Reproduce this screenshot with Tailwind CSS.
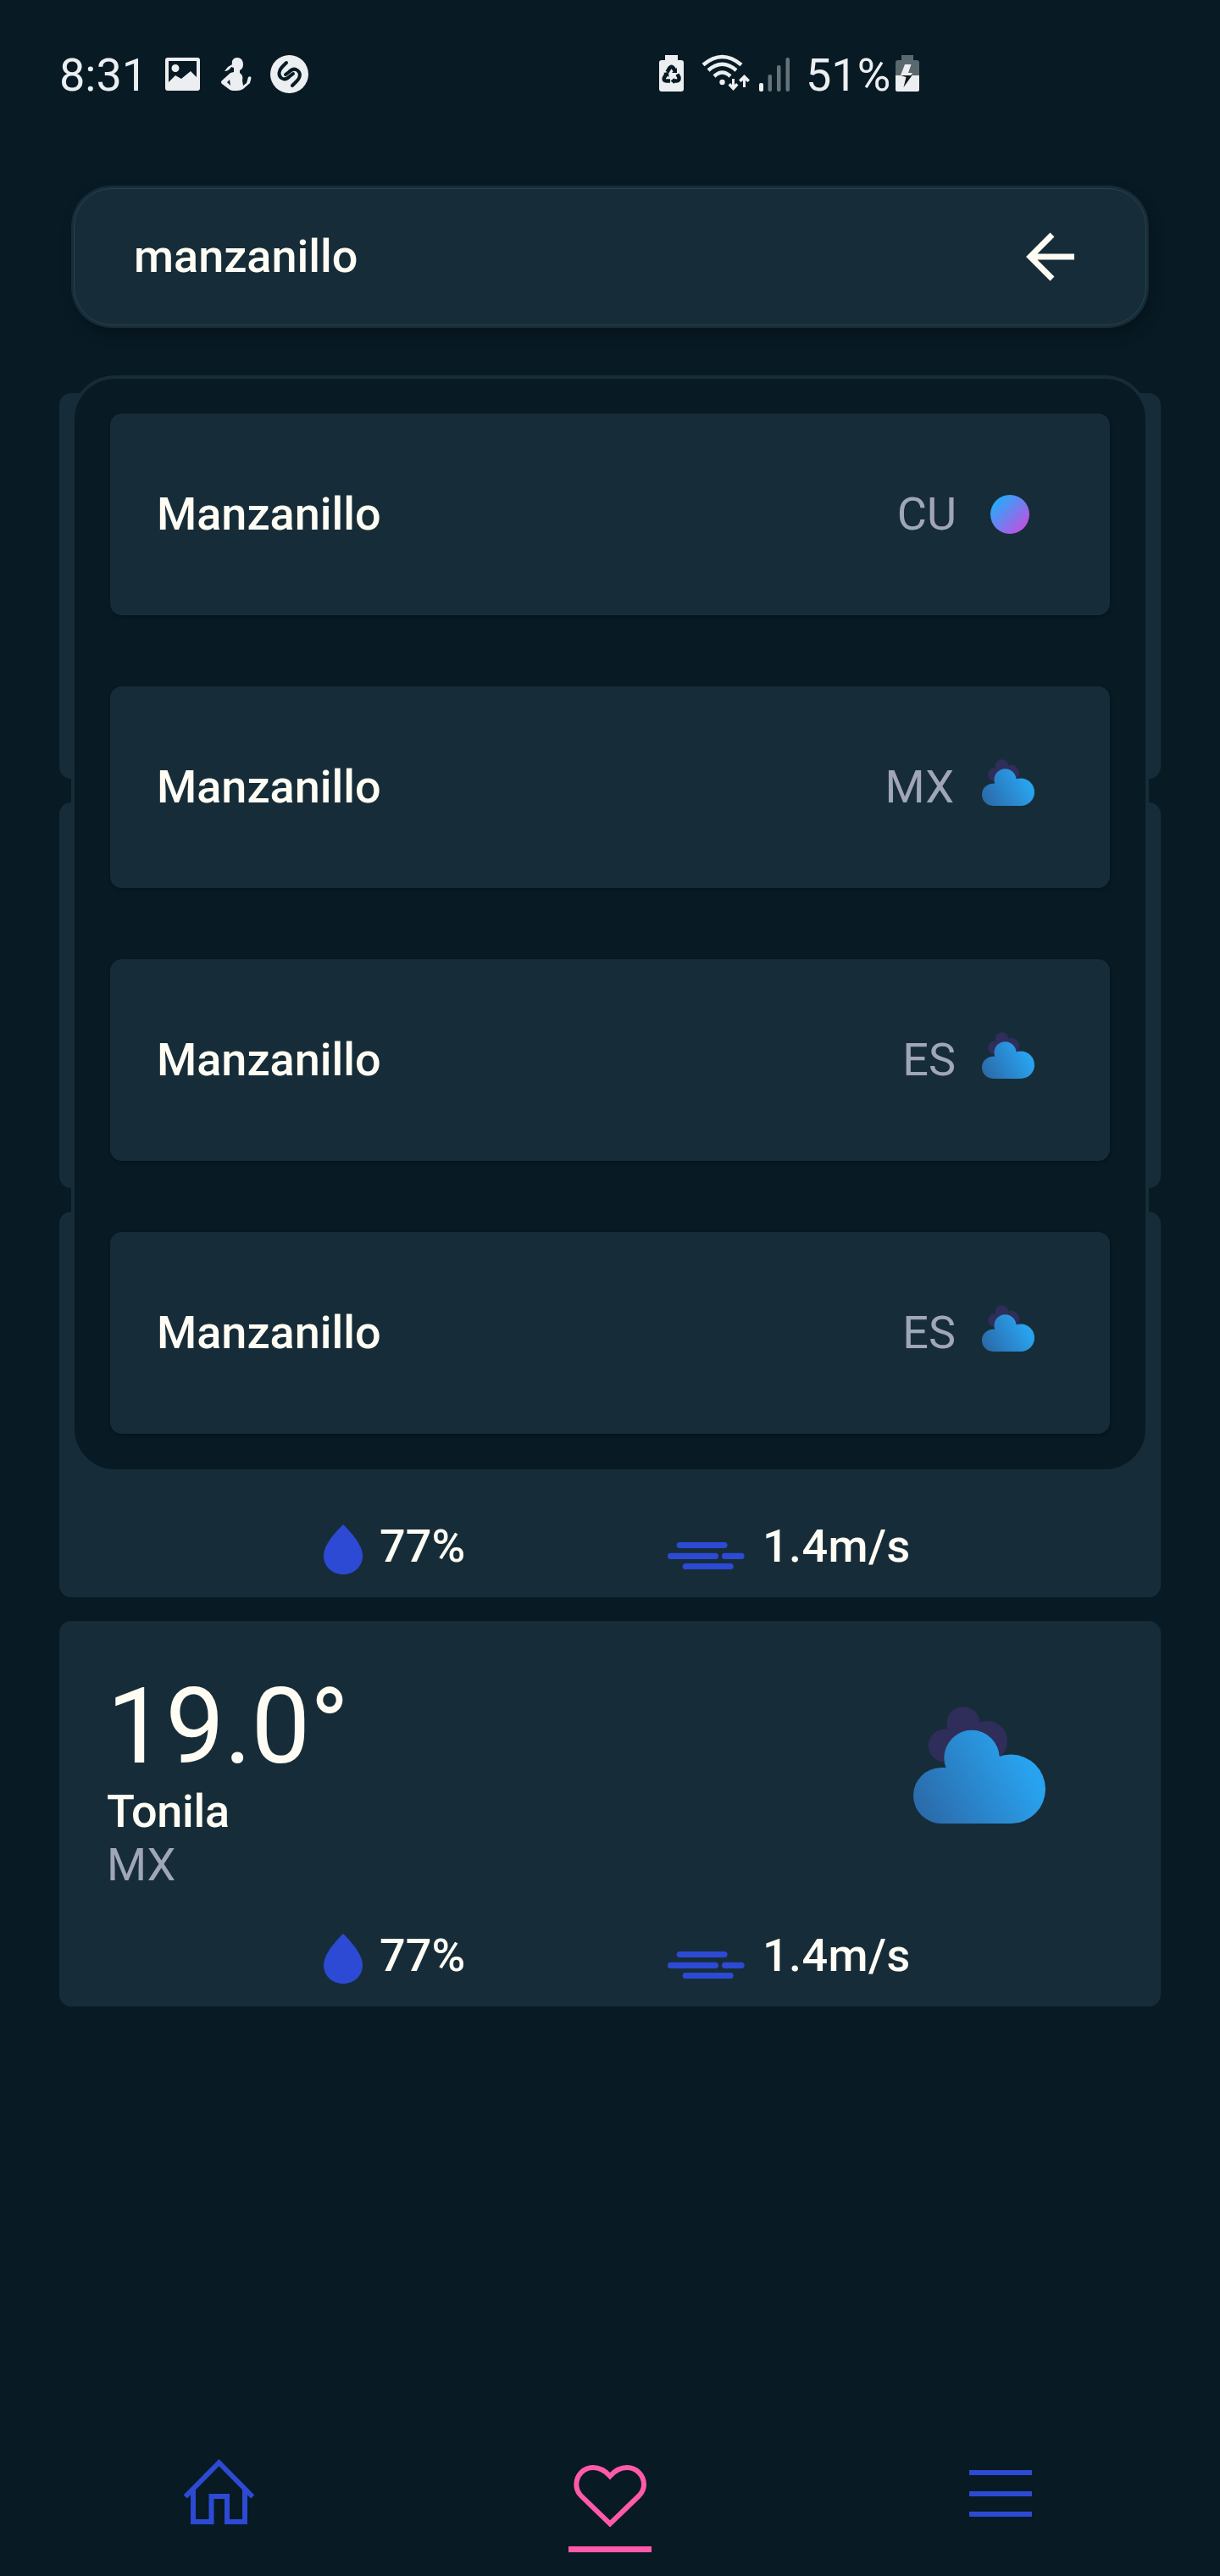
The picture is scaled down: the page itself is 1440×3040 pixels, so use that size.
<!DOCTYPE html>
<html lang="es">
<head>
<meta charset="utf-8">
<title>Weather favorites</title>
<script src="https://cdn.jsdelivr.net/npm/@tailwindcss/browser@4"></script>
</head>
<body class="bg-[#081a23]">
<svg class="absolute size-0">
  <defs>
    <linearGradient id="cloudFill" gradientUnits="userSpaceOnUse" x1="14" y1="130" x2="132" y2="62">
      <stop offset="0" stop-color="#2b6bab"/><stop offset="1" stop-color="#29a3ef"/>
    </linearGradient>
    <symbol id="cloud" viewBox="0 0 156 138">
      <g fill="#2f2d5a"><circle cx="37.3" cy="46" r="19.5"/><circle cx="59" cy="19.7" r="19.5"/><circle cx="87" cy="41" r="24"/><rect x="37" y="27" width="50" height="38"/></g>
      <g fill="url(#cloudFill)"><circle cx="33" cy="105" r="33"/><circle cx="69" cy="60.500" r="32.700"/><circle cx="115.300" cy="97.300" r="40.700"/><path d="M33 72H38L102 58L115 97V138H33Z"/></g>
    </symbol>
    <symbol id="drop" viewBox="0 0 46 59">
      <path fill="#2c4ad3" d="M23 0C32 9 46 24 46 37C46 50 35.500 59 23 59S0 50 0 37C0 24 14 9 23 0Z"/>
    </symbol>
    <symbol id="wind" viewBox="0 0 91 32">
      <g fill="#2c4ad3"><rect x="10.600" y="0" width="60" height="7" rx="3.500"/><rect x="0" y="12.700" width="60" height="7.200" rx="3.500"/><rect x="64" y="12.700" width="26.600" height="7.200" rx="3.500"/><rect x="17.700" y="25" width="60" height="7" rx="3.500"/></g>
    </symbol>
  </defs>
</svg>
<div class="relative flex h-[3040px] w-[1440px] flex-col overflow-hidden bg-[#081a23] font-[Roboto,sans-serif] text-[54px] leading-[63px] text-[#fffcf3]">

  <!-- Status bar -->
  <header class="flex h-[219px] items-start pt-[57px] pl-[70px] text-[#eceff1]">
    <span class="w-[125px] shrink-0 whitespace-nowrap">8:31</span>
    <svg class="mt-[7px] h-[48px] w-[172px] shrink-0" viewBox="195 64 172 48" fill="#eceff1">
      <path fill-rule="evenodd" d="M198 68H233Q236 68 236 71V104Q236 107 233 107H198Q195 107 195 104V71Q195 68 198 68ZM199 72V97L207 89L214 93L225 84L232 91V72ZM207 76A4.500 4.500 0 1 1 207 85A4.500 4.500 0 1 1 207 76Z"/>
      <path fill-rule="evenodd" d="M280 68C285 68 287 72 287 76C287 80 285 82 283 83V86C286 88 287 91 286 95L287 101L291 98L293 91Q296 89 296.500 92L295 98L287 105Q284 107 280 107H275Q272 107 270 105L262 99Q260 97 262 95L272 86L276 85V80L273 79Q270 84 265 84L269 79L274 76C273 71 276 68 280 68ZM271 94L268 97L272 101Z"/>
      <circle cx="341.500" cy="87.500" r="22.500"/>
      <path fill="none" stroke="#081a23" stroke-width="4" stroke-linecap="round" d="M338 74L333 79C329 83 328 89 332 92C336 95 339 93 342 90L346 87M345 101L350 96C355 91 355 86 351 83C347 80 344 82 341 85L337 88"/>
    </svg>
    <svg class="mt-[7px] ml-[408px] h-[48px] w-[172px] shrink-0" viewBox="775 64 172 48" fill="#eceff1">
      <path d="M785 65H800V71H804Q807 71 807 74V105Q807 108 804 108H781Q778 108 778 105V74Q778 71 781 71H785Z"/>
      <path fill="none" stroke="#081a23" stroke-width="4.500" d="M787.500 85L790.500 80Q792.500 78 794.500 80L797 84M799.500 87.500L801.500 91.500Q802 95.500 798.500 95.500H794M791 95.500H786.500Q782.500 95 784 91.500L786.500 87.500"/>
      <path fill="#081a23" d="M799 80V86H793ZM796 92V99L791.500 95.500ZM783 86L789 85L789.500 91Z"/>
      <g fill="none" stroke="#eceff1" stroke-width="4.500"><path d="M830 76.500Q852.500 57.500 875 76.500M836 83Q852.500 68.500 869 83M843 90Q852.500 81 862 90"/></g>
      <circle cx="852.500" cy="97" r="3.200"/>
      <path d="M864 93H867V100L869 98L871.500 100.500L865.500 107L859.500 100.500L862 98L864 100ZM877 103H880V95L882.500 97L885 94.500L878.500 88L872 94.500L874.500 97L877 95Z"/>
      <rect x="896" y="98" width="5" height="10" rx="2"/>
      <g fill="#66737a"><rect x="906.500" y="88" width="4.500" height="20" rx="2"/><rect x="917" y="77" width="4.500" height="31" rx="2"/><rect x="927.500" y="68" width="4.500" height="40" rx="2"/></g>
    </svg>
    <span class="w-[106px] shrink-0 pl-[4px] whitespace-nowrap">51%</span>
    <svg class="mt-[7px] h-[48px] w-[36px] shrink-0" viewBox="1053 64 36 48">
      <path fill="#5b686e" d="M1064 65H1078V71H1082Q1085 71 1085 74V89H1057V74Q1057 71 1060 71H1064Z"/>
      <path fill="#eceff1" d="M1057 89H1085V106Q1085 108 1083 108H1059Q1057 108 1057 106Z"/>
      <path fill="#eceff1" d="M1068 76H1075.500L1072 86H1077L1075 89H1063Z"/>
      <path fill="#10191e" d="M1063 89H1076.500L1066.500 103L1069.500 91Z"/>
    </svg>
  </header>

  <!-- Search -->
  <div class="mx-[84px] h-[168px] w-[1272px] shrink-0 rounded-[48px] bg-[#162d39] p-[3px] shadow-[4px_8px_16px_rgba(0,0,0,0.22)]">
    <div class="flex h-full items-center justify-between rounded-[45px] border border-[#2a424c] pr-[84px] pl-[70px]">
      <span class="pb-[2px] font-medium">manzanillo</span>
      <svg class="h-[58px] w-[58px]" viewBox="0 0 58 58" fill="none" stroke="#fffcf3" stroke-width="7"><path d="M32 3L6 29L32 55M6 29H58"/></svg>
    </div>
  </div>

  <!-- Saved places -->
  <main class="mt-[77px] flex flex-col gap-[28px] px-[70px]">
    <section class="h-[455px] rounded-[14px] bg-[#162d39]"></section>
    <section class="h-[455px] rounded-[14px] bg-[#162d39]"></section>
    <section class="flex h-[455px] flex-col justify-end rounded-[14px] bg-[#162d39] pb-[29px]">
      <div class="flex h-[63px] pl-[312px] font-medium">
        <div class="flex w-[406px]"><svg class="mt-[6px] mr-[20px] h-[59px] w-[46px]"><use href="#drop"/></svg><span>77%</span></div>
        <div class="flex"><svg class="mt-[27px] mr-[21px] h-[32px] w-[91px]"><use href="#wind"/></svg><span class="tracking-[0.4px]">1.4m/s</span></div>
      </div>
    </section>
    <section class="flex h-[455px] flex-col rounded-[14px] bg-[#162d39] pt-[52px]">
      <div class="flex h-[268px] justify-between pr-[136px] pl-[56px]">
        <div class="flex flex-col">
          <span class="h-[141px] text-[124px] leading-[145px] tracking-[-0.5px]">19.0°</span>
          <span class="font-medium tracking-[-0.3px]">Tonila</span>
          <span class="text-[#a0a6b6]">MX</span>
        </div>
        <svg class="mt-[49px] h-[138px] w-[156px]"><use href="#cloud"/></svg>
      </div>
      <div class="mt-[43px] flex h-[63px] pl-[312px] font-medium">
        <div class="flex w-[406px]"><svg class="mt-[6px] mr-[20px] h-[59px] w-[46px]"><use href="#drop"/></svg><span>77%</span></div>
        <div class="flex"><svg class="mt-[27px] mr-[21px] h-[32px] w-[91px]"><use href="#wind"/></svg><span class="tracking-[0.4px]">1.4m/s</span></div>
      </div>
    </section>
  </main>

  <!-- Search results overlay -->
  <div class="absolute top-[443px] left-[84px] flex h-[1295px] w-[1272px] flex-col gap-[84px] rounded-[52px] border-4 border-[#162d39] bg-[#081a23] px-[42px] pt-[41px]">
    <div class="flex h-[238px] items-center rounded-[14px] bg-[#162d39] pr-[89px] pl-[55px] shadow-[1px_2px_4px_rgba(0,0,0,0.2)]">
      <span class="grow pb-[2px] font-medium">Manzanillo</span><span class="mr-[40px] pb-[2px] text-[#a0a6b6]">CU</span>
      <span class="mr-[6px] size-[46px] rounded-full bg-linear-to-br/srgb from-[#08bbff] to-[#d943de]"></span>
    </div>
    <div class="flex h-[238px] items-center rounded-[14px] bg-[#162d39] pr-[89px] pl-[55px] shadow-[1px_2px_4px_rgba(0,0,0,0.2)]">
      <span class="grow pb-[2px] font-medium">Manzanillo</span><span class="mr-[33px] pb-[2px] text-[#a0a6b6]">MX</span>
      <svg class="-mt-[12px] h-[55px] w-[62px]"><use href="#cloud"/></svg>
    </div>
    <div class="flex h-[238px] items-center rounded-[14px] bg-[#162d39] pr-[89px] pl-[55px] shadow-[1px_2px_4px_rgba(0,0,0,0.2)]">
      <span class="grow pb-[2px] font-medium">Manzanillo</span><span class="mr-[31px] pb-[2px] text-[#a0a6b6]">ES</span>
      <svg class="-mt-[12px] h-[55px] w-[62px]"><use href="#cloud"/></svg>
    </div>
    <div class="flex h-[238px] items-center rounded-[14px] bg-[#162d39] pr-[89px] pl-[55px] shadow-[1px_2px_4px_rgba(0,0,0,0.2)]">
      <span class="grow pb-[2px] font-medium">Manzanillo</span><span class="mr-[31px] pb-[2px] text-[#a0a6b6]">ES</span>
      <svg class="-mt-[12px] h-[55px] w-[62px]"><use href="#cloud"/></svg>
    </div>
  </div>

  <!-- Bottom navigation -->
  <nav class="mt-auto flex h-[150px] shrink-0 items-start pl-[217px]">
    <svg class="mt-[10px] h-[82px] w-[84px]" viewBox="217 2900 84 82" fill="none" stroke="#2c4ad3" stroke-width="6"><path d="M218.800 2946.500L258.500 2906.200L298.200 2946.500M228 2937V2976H249.500V2946H268V2976H289V2937"/></svg>
    <div class="ml-[370px] flex flex-col items-center">
      <svg class="mt-[16px] h-[80px] w-[98px]" viewBox="671 2906 98 80" fill="none" stroke="#ff5aa9" stroke-width="6"><path d="M720 2922C714 2915.500 707 2912 700 2912C689 2912 680.300 2921 680.300 2932C680.300 2937.500 682.500 2942 686 2945.500L720 2978.300L754 2945.500C757.500 2942 760 2937.500 760 2932C760 2921 751 2912 740 2912C733 2912 726 2915.500 720 2922Z"/></svg>
      <div class="mt-[19px] h-[7px] w-[98px] bg-[#ff5aa9]"></div>
    </div>
    <svg class="mt-[25px] ml-[375px] h-[56px] w-[74px]" viewBox="0 0 74 56" fill="#2c4ad3"><path d="M0 0H74V6H0ZM0 25H74V31H0ZM0 49H74V55H0Z"/></svg>
  </nav>
</div>
</body>
</html>
